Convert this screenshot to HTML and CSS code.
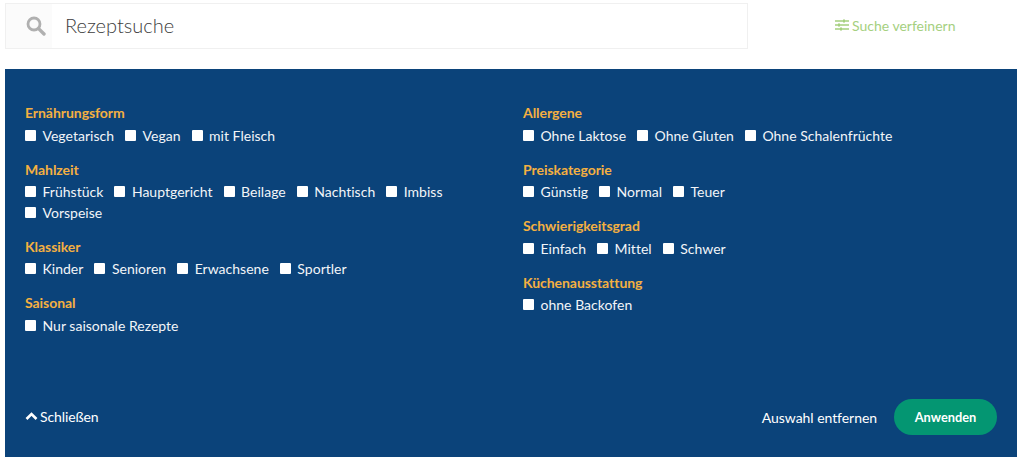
FILE: index.html
```html
<!DOCTYPE html>
<html lang="de">
<head>
<meta charset="utf-8">
<title>Rezeptsuche</title>
<link rel="stylesheet" href="styles.css">
</head>
<body>
<header class="top">
  <div class="search">
    <span class="search-icon">
      <svg width="20" height="20" viewBox="0 0 20 20"><circle cx="8" cy="8" r="6" fill="none" stroke="#b0b0b0" stroke-width="2.8"/><path d="M12.6 12.6 18 18" stroke="#b0b0b0" stroke-width="3.4" stroke-linecap="round"/></svg>
    </span>
    <span class="search-text">Rezeptsuche</span>
  </div>
  <a class="refine">
    <svg width="14" height="12" viewBox="0 0 14 12"><path d="M0 2h14M0 6h14M0 10h14" stroke="#a5d07f" stroke-width="1.5"/><path d="M9 .5v3M4 4.500v3M6 8.500v3" stroke="#a5d07f" stroke-width="2"/></svg>
    Suche verfeinern
  </a>
</header>
<main class="panel">
  <div class="cols">
    <div class="col">
      <section class="group"><h3>Ernährungsform</h3><div class="opts">
        <label><input type="checkbox">Vegetarisch</label><label><input type="checkbox">Vegan</label><label><input type="checkbox">mit Fleisch</label>
      </div></section>
      <section class="group"><h3>Mahlzeit</h3><div class="opts">
        <label><input type="checkbox">Frühstück</label><label><input type="checkbox">Hauptgericht</label><label><input type="checkbox">Beilage</label><label><input type="checkbox">Nachtisch</label><label><input type="checkbox">Imbiss</label><label><input type="checkbox">Vorspeise</label>
      </div></section>
      <section class="group"><h3>Klassiker</h3><div class="opts">
        <label><input type="checkbox">Kinder</label><label><input type="checkbox">Senioren</label><label><input type="checkbox">Erwachsene</label><label><input type="checkbox">Sportler</label>
      </div></section>
      <section class="group"><h3>Saisonal</h3><div class="opts">
        <label><input type="checkbox">Nur saisonale Rezepte</label>
      </div></section>
    </div>
    <div class="col">
      <section class="group"><h3>Allergene</h3><div class="opts">
        <label><input type="checkbox">Ohne Laktose</label><label><input type="checkbox">Ohne Gluten</label><label><input type="checkbox">Ohne Schalenfrüchte</label>
      </div></section>
      <section class="group"><h3>Preiskategorie</h3><div class="opts">
        <label><input type="checkbox">Günstig</label><label><input type="checkbox">Normal</label><label><input type="checkbox">Teuer</label>
      </div></section>
      <section class="group"><h3>Schwierigkeitsgrad</h3><div class="opts">
        <label><input type="checkbox">Einfach</label><label><input type="checkbox">Mittel</label><label><input type="checkbox">Schwer</label>
      </div></section>
      <section class="group"><h3>Küchenausstattung</h3><div class="opts">
        <label><input type="checkbox">ohne Backofen</label>
      </div></section>
    </div>
  </div>
  <footer class="foot">
    <a class="close">
      <svg width="13" height="9" viewBox="0 0 13 9"><path d="M1.500 7 6.500 2l5 5" fill="none" stroke="#fff" stroke-width="2.600"/></svg>
      Schließen
    </a>
    <div class="actions">
      <a class="clear">Auswahl entfernen</a>
      <button class="apply" type="button">Anwenden</button>
    </div>
  </footer>
</main>
</body>
</html>
```
FILE: styles.css
```css
* { box-sizing: border-box; }
html, body { margin: 0; height: 467px; overflow: hidden; background: #fff; }
body { padding: 3px 7px 0 5px; font-family: "Lato", "Open Sans", sans-serif; }
.top { display: flex; align-items: center; height: 46px; }
.search {
  width: 743px; height: 46px; display: flex; align-items: center;
  border: 1px solid #f0f0f0; background: #fff;
}
.search-icon { padding-left: 20px; display: flex; box-sizing: content-box; height: 44px; align-items: center; background: #fbfbfb; width: 26px; }
.search-text { margin: 0 0 2px 13px; font-size: 20px; font-weight: 300; color: #3d3d3d; }
.refine { margin: 0 0 2px 87px; display: flex; align-items: center; gap: 3px; font-size: 14px; color: #a5d07f; }
.panel {
  margin-top: 20px; height: 388px; background: #0b437a; color: #fff;
  padding: 35px 20px 0; display: flex; flex-direction: column;
}
.cols { display: flex; flex: 1; }
.col { flex: 0 0 498px; }
.group { margin-bottom: 16.500px; }
.group h3 { margin: 0; height: 18px; line-height: 18px; font-size: 14px; font-weight: 700; color: #f4b041; letter-spacing: -.05px; }
.opts { display: flex; flex-wrap: wrap; margin-top: 4px; width: 470px; row-gap: 2.500px; }
.opts label { display: flex; align-items: center; height: 18px; margin-right: 11px; font-size: 14px; color: #f2f5f8; letter-spacing: .02px; }
.opts input { appearance: none; width: 11px; height: 11px; margin: 0 6.500px 0 0; background: #fff; border-radius: 1px; }
.foot { display: flex; justify-content: space-between; align-items: center; height: 36px; margin-bottom: 22px; }
.close { display: flex; align-items: center; gap: 2px; font-size: 14px; margin-bottom: 2px; letter-spacing: -.1px; }
.actions { display: flex; align-items: center; gap: 17px; }
.clear { font-size: 14px; letter-spacing: -.05px; }
.apply {
  width: 103px; height: 36px; border: 0; border-radius: 18px; background: #049672;
  color: #fff; font: 700 12.800px "Lato", sans-serif;
}
```
